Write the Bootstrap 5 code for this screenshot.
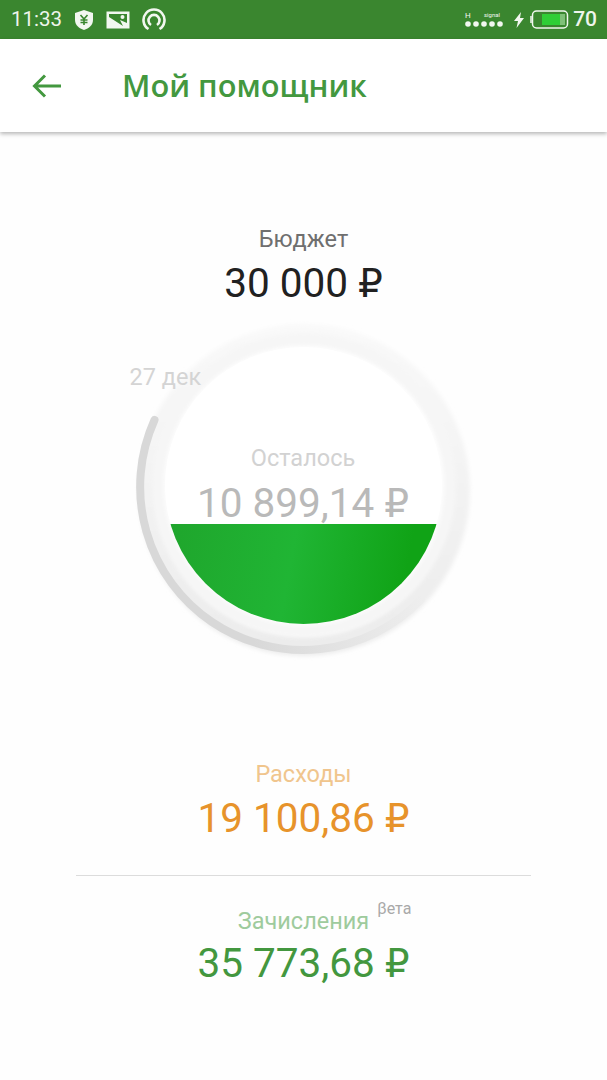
<!DOCTYPE html>
<html lang="ru">
<head>
    <meta charset="UTF-8" />
    <meta name="viewport" content="width=device-width, initial-scale=1" />
    <title>Мой помощник</title>
    <link href="https://cdn.jsdelivr.net/npm/bootstrap@5.3.0/dist/css/bootstrap.min.css" rel="stylesheet">
    <style>
        body { background: #fefefe; font-family: Roboto, "Liberation Sans", sans-serif; height: 1080px; overflow: hidden; }
        .status-strip { height: 39px; background: #3a862f; color: #eef5ec; padding: 0 10px 0 11px; }
        .status-time { font-size: 20.500px; line-height: 39px; width: 63px; }
        .status-level { font-size: 21px; font-weight: 500; line-height: 39px; }
        .app-head { height: 93px; background: #fff; box-shadow: 0 2px 4px rgba(0,0,0,.28); padding-left: 32px; position: relative; }
        .app-title { font-family: "Open Sans", sans-serif; font-size: 30.800px; font-weight: 600; color: #43983f; margin: 0 0 0 60px; line-height: 1; }
        .sum-label { font-size: 23.500px; line-height: 26px; }
        .sum-value { font-size: 40.500px; line-height: 48px; height: 48px; }
        .rub-sign { font-family: "DejaVu Sans", sans-serif; font-size: 39px; line-height: 1; }
        .budget-block { padding-top: 94px; }
        .budget-block .sum-label { color: #6f6f6f; }
        .budget-block .sum-value { color: #212121; margin-top: 7px; }
        .gauge { width: 340px; height: 330px; margin: 21px auto 0; position: relative; left: -1px; }
        .gauge-ring { position: absolute; inset: 0; overflow: visible; }
        .gauge-face { position: absolute; left: 32px; top: 19px; width: 277px; height: 277px; border-radius: 50%; background: #fff; overflow: hidden; }
        .gauge-fill { position: absolute; left: 0; right: 0; top: 177px; bottom: 0; background: linear-gradient(100deg, #1fa52c 0%, #20b534 45%, #10a316 85%); }
        .gauge-text { padding-top: 98px; color: #b9b9b9; }
        .gauge-text .sum-label { color: #d2d2d2; }
        .gauge-text .sum-value { margin-top: 8px; }
        .gauge-date { position: absolute; left: -3px; top: 36px; font-size: 23.500px; line-height: 26px; color: #d4d4d4; }
        .spend-block { margin-top: 103px; }
        .spend-block .sum-label { color: #f0c58d; }
        .spend-block .sum-value { color: #e7932b; margin-top: 7px; }
        .split-line { margin: 33px 76px 0; border-top: 1px solid #dcdcdc; opacity: 1; }
        .income-block { margin-top: 32px; }
        .income-block .sum-label { color: #9ecb9d; }
        .income-block .sum-value { color: #43973f; margin-top: 5px; }
        .income-title { position: relative; }
        .beta-mark { position: absolute; left: calc(100% + 8px); top: -8px; font-size: 16px; line-height: 20px; color: #a9a9a9; white-space: nowrap; }
    </style>
</head>
<body>

<div class="status-strip d-flex align-items-center">
    <span class="status-time">11:33</span>
    <svg width="20" height="22" viewBox="0 0 20 22"><path d="M10 1 L19 4 V11 C19 16 15 19.500 10 21 C5 19.500 1 16 1 11 V4 Z" fill="#f2f7f0"/><path d="M6.500 6 L10 10 L13.500 6 M10 10 V16 M6.500 11 H13.500 M6.500 13.500 H13.500" stroke="#3a862f" stroke-width="1.600" fill="none"/></svg>
    <svg width="24" height="18" viewBox="0 0 24 18" style="margin-left:12px"><rect x="0.500" y="0.500" width="23" height="17" fill="#f2f7f0"/><path d="M3 3 H21 V12 L14 9 L17 15 L3 6 Z" fill="#3a862f"/><circle cx="16.500" cy="6" r="2" fill="#f2f7f0"/></svg>
    <svg width="24" height="24" viewBox="0 0 24 24" style="margin-left:12px" fill="none" stroke="#f2f7f0" stroke-width="2.600"><path d="M6.500 21 A10.500 10.500 0 1 1 17.500 21"/><path d="M9 17 A5.500 5.500 0 1 1 15 17"/></svg>
    <div class="ms-auto d-flex align-items-center">
        <svg width="40" height="18" viewBox="0 0 40 18" fill="#f2f7f0"><text x="1" y="7" font-size="8" font-family="Roboto, sans-serif">H</text><text x="20" y="6" font-size="6" font-family="Roboto, sans-serif">signal</text><circle cx="4" cy="13" r="2.800"/><circle cx="12" cy="13" r="2.800"/><circle cx="20" cy="13" r="2.800"/><circle cx="28" cy="13" r="2.800"/><circle cx="36" cy="13" r="2.800"/></svg>
        <svg width="12" height="18" viewBox="0 0 12 18" style="margin-left:9px" fill="#f2f7f0"><path d="M8 1 L1 10 H5 L3.500 17 L11 7 H7 Z"/></svg>
        <svg width="39" height="19" viewBox="0 0 39 19" style="margin-left:5px"><rect x="2.500" y="1" width="35" height="17" rx="4" fill="none" stroke="#f2f7f0" stroke-width="1.500"/><path d="M1 6 V13" stroke="#f2f7f0" stroke-width="1.500"/><rect x="12" y="4" width="18" height="11" fill="#2fce36"/><rect x="30" y="4" width="5" height="11" fill="#7fc078"/></svg>
        <span class="status-level ms-1">70</span>
    </div>
</div>

<header class="app-head d-flex align-items-center">
    <svg width="30" height="26" viewBox="0 0 30 26" fill="none" stroke="#43983f" stroke-width="3"><path d="M29 13 H3 M13 2.500 L2.500 13 L13 23.500"/></svg>
    <h1 class="app-title">Мой помощник</h1>
</header>

<main class="text-center">
    <section class="budget-block">
        <div class="sum-label">Бюджет</div>
        <div class="sum-value">30 000 <span class="rub-sign">₽</span></div>
    </section>

    <section class="gauge">
        <svg class="gauge-ring" width="340" height="330" viewBox="0 0 340 330" fill="none">
            <defs>
                <filter id="softRing" x="-10%" y="-10%" width="120%" height="120%"><feGaussianBlur stdDeviation="2"/></filter>
                <linearGradient id="ringShade" x1="0" y1="0" x2="0" y2="1"><stop offset="0" stop-color="#f9f9f9"/><stop offset="1" stop-color="#ececec"/></linearGradient>
                <linearGradient id="arcFade" gradientUnits="userSpaceOnUse" x1="120" y1="0" x2="290" y2="0"><stop offset="0" stop-color="#d8d8d8"/><stop offset="1" stop-color="#eeeeee"/></linearGradient>
            </defs>
            <circle cx="171" cy="162" r="156" stroke="url(#ringShade)" stroke-width="20" filter="url(#softRing)"/>
            <path d="M21.500 92 A163 163 0 0 0 287.500 272" stroke="url(#arcFade)" stroke-width="8" stroke-linecap="round"/>
            <circle cx="171" cy="157" r="146" stroke="#f6f6f6" stroke-width="12" filter="url(#softRing)"/>
        </svg>
        <div class="gauge-face">
            <div class="gauge-fill"></div>
            <div class="gauge-text position-relative">
                <div class="sum-label">Осталось</div>
                <div class="sum-value">10 899,14 <span class="rub-sign">₽</span></div>
            </div>
        </div>
        <span class="gauge-date">27 дек</span>
    </section>

    <section class="spend-block">
        <div class="sum-label">Расходы</div>
        <div class="sum-value">19 100,86 <span class="rub-sign">₽</span></div>
    </section>

    <hr class="split-line">

    <section class="income-block">
        <div class="sum-label"><span class="income-title">Зачисления<span class="beta-mark">βета</span></span></div>
        <div class="sum-value">35 773,68 <span class="rub-sign">₽</span></div>
    </section>
</main>

</body>
</html>
